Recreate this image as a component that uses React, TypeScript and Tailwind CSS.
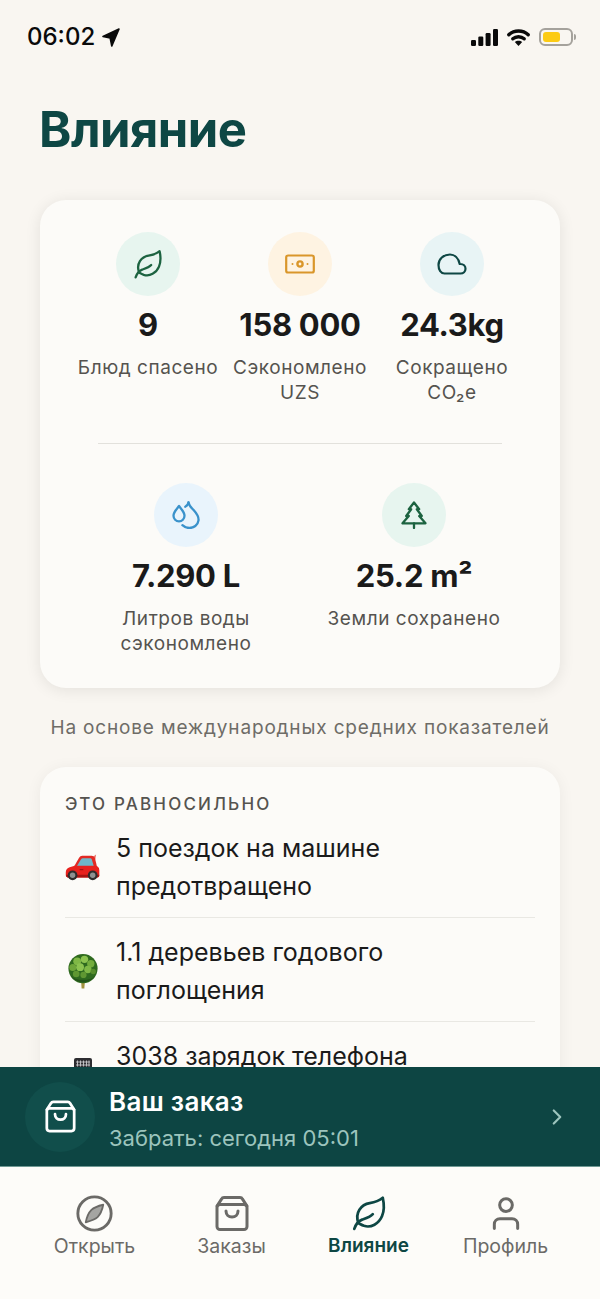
import { ChevronRight } from 'lucide-react';

const font = { fontFamily: 'Inter, "Noto Sans", sans-serif' };

function LeafIcon({ className }: { className?: string }) {
    return (
        <svg viewBox="0 0 32 32" fill="none" stroke="currentColor" strokeWidth={2.3} strokeLinecap="round" strokeLinejoin="round" className={className}>
            <path d="M7.200 24.600C3.600 15.800 9.600 8.600 16.600 7.600c4.200-.6 7.600-1.600 11-4.400 1.200 5.400 1.400 10.600-.6 15.400-2.600 6.400-9.400 10.200-15.200 8.200-1.600-.6-3-1.400-4.600-2.200Z" />
            <path d="M3.600 29.400c1.200-3.600 3.200-6.600 6.600-7.800 3.600-1.200 6.600-2 9-4.600" />
        </svg>
    );
}

function BagIcon({ className }: { className?: string }) {
    return (
        <svg viewBox="0 0 34 36" fill="none" stroke="currentColor" strokeWidth={3} strokeLinecap="round" strokeLinejoin="round" className={className}>
            <path d="M2 10.500 6.500 3.600C7 2.600 8 2 9 2h16c1 0 2 .6 2.500 1.600L32 10.500" />
            <rect x="2" y="9" width="30" height="25" rx="3" />
            <path d="M11 15.500c0 3.600 2.600 6 6 6s6-2.400 6-6" />
        </svg>
    );
}

function CompassIcon({ className }: { className?: string }) {
    return (
        <svg viewBox="0 0 36 36" fill="none" stroke="currentColor" strokeWidth={2.8} strokeLinejoin="round" className={className}>
            <circle cx="18" cy="18" r="16.200" />
            <path d="M26.500 9.500C25.500 14.500 23.500 19 21 21.500c-2.500 2.300-6.500 3.600-11.500 5C10.500 21.500 12.500 17 15 14.500c2.600-2.400 6.500-3.800 11.500-5Z" fill="currentColor" fillOpacity={0.6} strokeWidth={1.800} />
        </svg>
    );
}

function UserIcon({ className }: { className?: string }) {
    return (
        <svg viewBox="0 0 30 36" fill="none" stroke="currentColor" strokeWidth={3.2} strokeLinecap="round" className={className}>
            <circle cx="15" cy="9" r="6.800" />
            <path d="M2.500 34v-4.500c0-3.400 2.600-6 6-6h13c3.400 0 6 2.600 6 6V34" />
        </svg>
    );
}

function BillIcon({ className }: { className?: string }) {
    return (
        <svg viewBox="0 0 30 20" fill="none" stroke="currentColor" strokeWidth={2.2} className={className}>
            <rect x="1.200" y="1.500" width="27.600" height="17" rx="1.800" />
            <circle cx="15" cy="10" r="2.600" strokeWidth={2.400} />
            <circle cx="7.500" cy="10" r="1" fill="currentColor" stroke="none" />
            <circle cx="22.500" cy="10" r="1" fill="currentColor" stroke="none" />
        </svg>
    );
}

function CloudIcon({ className }: { className?: string }) {
    return (
        <svg viewBox="0 0 30 22" fill="none" stroke="currentColor" strokeWidth={2.2} strokeLinejoin="round" className={className}>
            <path d="M7.500 20.500h16c2.800 0 5-2 5-4.700 0-2.800-2.200-4.800-5-4.800h-.8C21.500 5 17.500 1.500 13 1.500 6.500 1.500 1.500 6 1.500 12c0 5 2.500 8.500 6 8.500Z" />
        </svg>
    );
}

function DropsIcon({ className }: { className?: string }) {
    return (
        <svg viewBox="0 0 28 28" fill="none" stroke="currentColor" strokeWidth={2.3} strokeLinecap="round" strokeLinejoin="round" className={className}>
            <path d="M7 5C5 8 1.500 10.500 1.500 14.800a5.500 5.500 0 0 0 11 0C12.500 10.500 9 8 7 5Z" />
            <path d="M16.500 1.500c-.4 2-1.400 3.300-3.300 4.200" />
            <path d="M16.500 1.500c.4 3 2.800 5 5.100 7.600 3 3.300 5.400 6 4.900 10.300-.6 4.800-4.900 7.600-9.100 7.600-2.800 0-5-1.100-7-2.800" />
        </svg>
    );
}

function PineIcon({ className }: { className?: string }) {
    return (
        <svg viewBox="0 0 26 28" fill="none" stroke="currentColor" strokeWidth={2.3} strokeLinecap="round" strokeLinejoin="round" className={className}>
            <path d="M13 1.500 7.800 8.200h2.400L5.200 15h2.600L1.500 22.300h23L18.200 15h2.600l-5-6.800h2.400Z" />
            <path d="M13 22.500v4.500" />
        </svg>
    );
}

function CarEmoji() {
    return (
        <svg viewBox="0 0 36 27" className="h-[27px] w-[36px]">
            <path d="M28 3 32 0 31 6Z" fill="#e8766c" />
            <path d="M9 13 14.500 3.500C15.200 2.300 16.300 1.500 17.800 1.500h9.500c1.700 0 3 .9 3.500 2.500L33 13Z" fill="#e22a24" />
            <path d="M12 12.500 16.500 5c.4-.7 1.100-1 1.800-1h7.400c.9 0 1.600.5 1.900 1.300l2.100 7.200Z" fill="#6fb7c8" />
            <path d="M.8 18.500c0-2.800 1.700-4.500 4-5.200L10 11.800h21c2.500 0 4.300 1.700 4.300 4.500v5c0 1.500-1 2.400-2.300 2.400H3c-1.300 0-2.200-1-2.200-2.400Z" fill="#e8211d" />
            <path d="M1.200 21h34v1c0 1-.8 1.700-1.800 1.700H3c-1 0-1.800-.7-1.800-1.700Z" fill="#a81412" />
            <rect x="15" y="15" width="4" height="1.400" rx="0.700" fill="#a81412" />
            <circle cx="7.800" cy="21.500" r="5" fill="#2f2c2c" />
            <circle cx="7.800" cy="21.500" r="2.800" fill="#8d9090" />
            <circle cx="28.500" cy="21.500" r="5" fill="#2f2c2c" />
            <circle cx="28.500" cy="21.500" r="2.800" fill="#8d9090" />
        </svg>
    );
}

function TreeEmoji() {
    return (
        <svg viewBox="0 0 32 36" className="h-[35px] w-[32px]">
            <path d="M13.800 24h4.400l-.8 11.500h-2.800Z" fill="#a3933f" />
            <circle cx="16" cy="15" r="15" fill="#2f6a1f" />
            <path d="M3 21.500a15 15 0 0 0 26 0c-3 4-7.500 5-13 5s-10-1-13-5Z" fill="#24531a" />
            <circle cx="10" cy="7.500" r="4" fill="#7fb846" />
            <circle cx="17.500" cy="5.500" r="3.800" fill="#8cc350" />
            <circle cx="24" cy="10" r="3.800" fill="#74ad3e" />
            <circle cx="5.500" cy="14" r="3.600" fill="#6ea63a" />
            <circle cx="13" cy="13.500" r="4" fill="#8cc350" />
            <circle cx="21" cy="16" r="3.800" fill="#7fb846" />
            <circle cx="9" cy="20.500" r="3.400" fill="#5f9732" />
            <circle cx="16.500" cy="21.500" r="3.200" fill="#5f9732" />
            <circle cx="26.500" cy="18" r="2.800" fill="#568c2c" />
        </svg>
    );
}

function PhoneEmoji() {
    return (
        <svg viewBox="0 0 18 30" className="h-[30px] w-[18px]">
            <rect width="18" height="30" rx="2" fill="#2d2d31" />
            <path d="M2 4h14M2 7h14M3.500 2.500v6M6.500 2.500v6M9.500 2.500v6M12.500 2.500v6M15 2.500v6" stroke="#c8c8cc" strokeWidth={0.900} />
        </svg>
    );
}

function StatusBar() {
    return (
        <div className="flex h-[74px] shrink-0 items-center justify-between pl-[27px] pr-[24px]">
            <div className="flex items-center gap-[7px]">
                <span className="text-[24px] leading-none font-medium text-[#0a0a0a]">06:02</span>
                <svg viewBox="0 0 18 19" className="h-[19px] w-[18px]">
                    <path d="M17 1 9.800 18 8.200 10 1 8.500Z" fill="#0a0a0a" stroke="#0a0a0a" strokeWidth={1.6} strokeLinejoin="round" />
                </svg>
            </div>
            <div className="flex items-center">
                <svg viewBox="0 0 27 17" className="h-[17px] w-[27px]">
                    <rect x="0" y="11" width="5" height="6" rx="1.200" fill="#0a0a0a" />
                    <rect x="7.300" y="7.500" width="5" height="9.500" rx="1.200" fill="#0a0a0a" />
                    <rect x="14.600" y="4" width="5" height="13" rx="1.200" fill="#0a0a0a" />
                    <rect x="22" y="0" width="5" height="17" rx="1.200" fill="#0a0a0a" />
                </svg>
                <svg viewBox="0 0 23 17" className="ml-[9px] h-[17px] w-[23px]">
                    <path d="M1.800 5.800C7 .8 16 .8 21.200 5.800" fill="none" stroke="#0a0a0a" strokeWidth={3.400} strokeLinecap="round" />
                    <path d="M5.800 9.800c3.200-2.800 8.200-2.800 11.400 0" fill="none" stroke="#0a0a0a" strokeWidth={3.400} strokeLinecap="round" />
                    <path d="M11.500 17 7.800 13c2-1.800 5.400-1.800 7.400 0Z" fill="#0a0a0a" />
                </svg>
                <div className="ml-[9px] flex items-center gap-[1px]">
                    <div className="h-[18px] w-[34px] rounded-[6px] border-2 border-[#a5a29c] p-[2px]">
                        <div className="h-full w-[17px] rounded-[3px] bg-[#fccb14]" />
                    </div>
                    <div className="h-[6px] w-[2px] rounded-r-sm bg-[#a5a29c]" />
                </div>
            </div>
        </div>
    );
}

function Stat({ icon, circle, value, label }: { icon: React.ReactNode; circle: string; value: React.ReactNode; label: React.ReactNode }) {
    return (
        <div className="flex flex-col items-center text-center">
            <div className={`flex size-[64px] items-center justify-center rounded-full ${circle}`}>{icon}</div>
            <div className="mt-[11px] text-[31px] leading-[36px] font-bold tracking-[-0.3px] text-[#1a1a1a]">{value}</div>
            <div className="mt-[12px] text-[19px] leading-[25px] tracking-[0.55px] whitespace-nowrap text-[#55534f]">{label}</div>
        </div>
    );
}

function EquivRow({ emoji, children }: { emoji: React.ReactNode; children: React.ReactNode }) {
    return (
        <div className="flex items-center border-b border-[#e9e8e3] pt-[15px] pb-[12px]">
            <div className="flex w-[51px] shrink-0 justify-center pr-[16px]">{emoji}</div>
            <div className="text-[25px] leading-[38px] text-[#1a1a1a]">{children}</div>
        </div>
    );
}

function Tab({ icon, label, active }: { icon: React.ReactNode; label: string; active?: boolean }) {
    return (
        <div className={`flex flex-col items-center ${active ? 'text-[#0e4744]' : 'text-[#6b6a67]'}`}>
            <div className="flex h-[38px] items-center justify-center">{icon}</div>
            <div className={`mt-[2px] leading-[24px] ${active ? 'text-[19px] font-semibold' : 'text-[19.5px]'}`}>{label}</div>
        </div>
    );
}

export default function App() {
    return (
        <div style={font} className="flex h-[1299px] w-[600px] flex-col overflow-hidden bg-[#f9f6f1]">
            <StatusBar />

            <main className="min-h-0 flex-1 overflow-hidden px-[40px]">
                <h1 className="mt-[26px] -ml-px text-[49px] leading-[60px] font-bold tracking-[-0.5px] text-[#0e4744]">Влияние</h1>

                <section className="mt-[40px] rounded-[26px] bg-[#fcfbf8] px-[32px] pt-[32px] pb-[32px] shadow-[0_2px_16px_rgba(0,0,0,0.09)]">
                    <div className="grid grid-cols-3">
                        <Stat
                            circle="bg-[#e7f5ef]"
                            icon={<LeafIcon className="size-[32px] text-[#1c6340]" />}
                            value="9"
                            label="Блюд спасено"
                        />
                        <Stat
                            circle="bg-[#fef3e2]"
                            icon={<BillIcon className="h-[20px] w-[30px] text-[#d9962a]" />}
                            value="158 000"
                            label={<>Сэкономлено<br />UZS</>}
                        />
                        <Stat
                            circle="bg-[#e8f4f5]"
                            icon={<CloudIcon className="h-[22px] w-[30px] text-[#0e4744]" />}
                            value="24.3kg"
                            label={<>Сокращено<br />CO₂e</>}
                        />
                    </div>

                    <div className="mx-[26px] mt-[38px] mb-[39px] h-px bg-[#e2e1dc]" />

                    <div className="grid grid-cols-2">
                        <Stat
                            circle="bg-[#e9f4fc]"
                            icon={<DropsIcon className="size-[28px] text-[#3a92cb]" />}
                            value="7.290 L"
                            label={<>Литров воды<br />сэкономлено</>}
                        />
                        <Stat
                            circle="bg-[#e7f5ef]"
                            icon={<PineIcon className="h-[28px] w-[26px] text-[#1c6340]" />}
                            value="25.2 m²"
                            label="Земли сохранено"
                        />
                    </div>
                </section>

                <p className="mt-[28px] text-center text-[19px] leading-[24px] tracking-[0.83px] whitespace-nowrap text-[#6e6c67]">
                    На основе международных средних показателей
                </p>

                <section className="mt-[27px] rounded-[26px] bg-[#fcfbf8] px-[25px] pt-[27px] pb-[60px] shadow-[0_2px_16px_rgba(0,0,0,0.06)]">
                    <div className="text-[17px] leading-[20px] font-medium tracking-[2.2px] text-[#55534f]">ЭТО РАВНОСИЛЬНО</div>
                    <EquivRow emoji={<CarEmoji />}>
                        5 поездок на машине
                        <br />
                        предотвращено
                    </EquivRow>
                    <EquivRow emoji={<TreeEmoji />}>
                        1.1 деревьев годового
                        <br />
                        поглощения
                    </EquivRow>
                    <div className="flex items-start pt-[15px]">
                        <div className="flex w-[51px] shrink-0 justify-center pt-[21px] pr-[16px]">
                            <PhoneEmoji />
                        </div>
                        <div className="text-[25px] leading-[38px] text-[#1a1a1a]">3038 зарядок телефона</div>
                    </div>
                </section>
            </main>

            <div className="flex h-[100px] shrink-0 items-center border-b border-[#6f9994] bg-[#0d4543] pl-[25px] pr-[30px]">
                <div className="flex size-[70px] shrink-0 items-center justify-center rounded-full bg-[#114e4b]">
                    <BagIcon className="h-[33px] w-[31px] text-white" />
                </div>
                <div className="ml-[14px] min-w-0 flex-1 pt-[4px]">
                    <div className="text-[26px] leading-[32px] font-semibold tracking-[0.3px] text-white">Ваш заказ</div>
                    <div className="mt-[7px] text-[22px] leading-[26px] text-[#9cc4bd]">Забрать: сегодня 05:01</div>
                </div>
                <ChevronRight className="size-[26px] text-[#9cc4bd]" strokeWidth={2} />
            </div>

            <nav className="grid h-[132px] shrink-0 grid-cols-4 bg-[#fdfcf9] px-[26px] pt-[27px]">
                <Tab icon={<CompassIcon className="size-[37px]" />} label="Открыть" />
                <Tab icon={<BagIcon className="h-[37px] w-[34px]" />} label="Заказы" />
                <Tab active icon={<LeafIcon className="size-[38px]" />} label="Влияние" />
                <Tab icon={<UserIcon className="h-[35px] w-[28px]" />} label="Профиль" />
            </nav>
        </div>
    );
}
